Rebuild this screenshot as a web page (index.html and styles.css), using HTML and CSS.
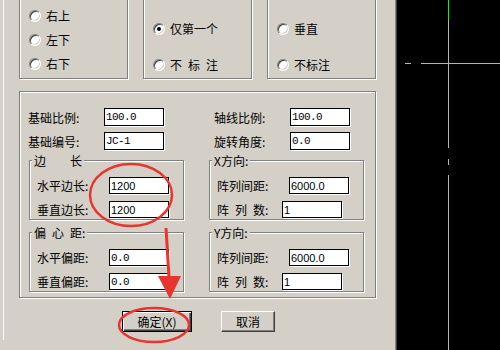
FILE: index.html
```html
<!DOCTYPE html>
<html lang="zh">
<head>
  <meta charset="UTF-8">
  <title>基础参数</title>
  <link rel="stylesheet" href="styles.css">
</head>
<body>
  <div class="screen">
    <div class="dialog">
      <div class="tab">
        <div class="frame">
          <div class="top-groups">
            <div class="group opt opt-three">
              <label class="radio-row"><span class="radio"></span>右上</label>
              <label class="radio-row"><span class="radio"></span>左下</label>
              <label class="radio-row"><span class="radio"></span>右下</label>
            </div>
            <div class="group opt opt-two">
              <label class="radio-row"><span class="radio checked"></span>仅第一个</label>
              <label class="radio-row wide"><span class="radio"></span>不 标 注</label>
            </div>
            <div class="group opt opt-two">
              <label class="radio-row"><span class="radio"></span>垂直</label>
              <label class="radio-row"><span class="radio"></span>不标注</label>
            </div>
          </div>

          <div class="group panel">
            <div class="pair-row">
              <div class="pair"><span class="lbl">基础比例:</span><input class="box mono" value="100.0"></div>
              <div class="pair"><span class="lbl">轴线比例:</span><input class="box mono" value="100.0"></div>
            </div>
            <div class="pair-row">
              <div class="pair"><span class="lbl">基础编号:</span><input class="box mono" value="JC-1"></div>
              <div class="pair"><span class="lbl">旋转角度:</span><input class="box mono" value="0.0"></div>
            </div>

            <div class="sub-grid">
              <div class="group sub">
                <span class="caption wide">边    长</span>
                <div class="field"><span class="lbl-sub">水平边长:</span><input class="box small sans" value="1200"></div>
                <div class="field"><span class="lbl-sub">垂直边长:</span><input class="box small sans" value="1200"></div>
              </div>
              <div class="group sub">
                <span class="caption">X方向:</span>
                <div class="field"><span class="lbl-sub">阵列间距:</span><input class="box small sans" value="6000.0"></div>
                <div class="field"><span class="lbl-sub lbl-short wide">阵 列 数:</span><input class="box small sans" value="1"></div>
              </div>
              <div class="group sub">
                <span class="caption wide">偏 心 距:</span>
                <div class="field"><span class="lbl-sub">水平偏距:</span><input class="box small mono" value="0.0"></div>
                <div class="field"><span class="lbl-sub">垂直偏距:</span><input class="box small mono" value="0.0"></div>
              </div>
              <div class="group sub">
                <span class="caption">Y方向:</span>
                <div class="field"><span class="lbl-sub">阵列间距:</span><input class="box small sans" value="6000.0"></div>
                <div class="field"><span class="lbl-sub lbl-short wide">阵 列 数:</span><input class="box small sans" value="1"></div>
              </div>
            </div>
          </div>
        </div>

        <div class="buttons">
          <button class="btn default">确定(X)</button>
          <button class="btn cancel">取消</button>
        </div>
      </div>

      <!-- red hand-drawn marks over the dialog -->
      <svg class="marks" width="396" height="350" viewBox="0 0 396 350">
        <ellipse cx="131" cy="195" rx="41" ry="31" />
        <line x1="166" y1="228" x2="169" y2="277" />
        <polygon points="158,276 181,276 170,299" />
        <ellipse cx="154" cy="325" rx="35" ry="17" />
      </svg>
    </div>

    <div class="canvas">
      <svg width="103" height="350" viewBox="0 0 103 350">
        <line class="green" x1="51.5" y1="0" x2="51.5" y2="20" />
        <line x1="51.5" y1="20" x2="51.5" y2="148" />
        <line x1="51.5" y1="159" x2="51.5" y2="165" />
        <line x1="51.5" y1="175" x2="51.5" y2="350" />
        <line x1="24" y1="63.5" x2="103" y2="63.5" />
        <line x1="8" y1="63.5" x2="14" y2="63.5" />
      </svg>
    </div>
  </div>
</body>
</html>
```

FILE: styles.css
```css
* {
  box-sizing: border-box;
}

body {
  margin: 0;
  background-color: #d4d0c8;
  font-family: "Noto Sans CJK SC", "Noto Sans", sans-serif;
  font-size: 12px;
  color: #000;
}

.screen {
  display: flex;
  width: 500px;
  height: 350px;
  overflow: hidden;
}

.dialog {
  position: relative;
  width: 396px;
  height: 350px;
  border-right: 1px solid #8a8a8a;
  background-color: #d4d0c8;
}

.tab {
  margin-left: 3px;
  height: 100%;
  border-left: 1px solid #fff;
  padding-left: 7px;
}

/* etched group box, windows classic */
.group {
  border: 1px solid #808080;
  box-shadow: inset 1px 1px 0 #fff, 1px 1px 0 #fff;
}

.frame {
  margin-top: -10px;
  width: 375px;
  height: 313px;
  padding: 5px 0 0 8px;
}

.top-groups {
  display: flex;
  gap: 15px;
}

.opt {
  width: 109px;
  height: 84px;
  padding-left: 9px;
  display: flex;
  flex-direction: column;
}

.opt-three {
  padding-top: 8px;
}

.opt-two {
  padding-top: 21px;
  gap: 12px;
}

.radio-row {
  display: flex;
  align-items: center;
  height: 24px;
  line-height: 12px;
}

.radio {
  position: relative;
  width: 12px;
  height: 12px;
  margin-right: 5px;
  border-radius: 50%;
  border: 1px solid;
  border-color: #808080 #fff #fff #808080;
  background-color: #fff;
  box-shadow: inset 1px 1px 0 #404040, inset -1px -1px 0 #d4d0c8;
}

.radio.checked::after {
  content: "";
  position: absolute;
  left: 3px;
  top: 3px;
  width: 4px;
  height: 4px;
  border-radius: 50%;
  background-color: #000;
}

.wide {
  white-space: pre;
  word-spacing: 3.3px;
}

.panel {
  margin-top: 12px;
  width: 357px;
  height: 207px;
  padding: 16px 0 0 9px;
}

.pair-row {
  display: flex;
  gap: 50px;
  height: 18px;
  margin-left: -1px;
}

.pair-row + .pair-row {
  margin-top: 6px;
}

.pair {
  display: flex;
  align-items: center;
}

.lbl {
  width: 76px;
}

.box {
  width: 60px;
  height: 18px;
  margin: 0;
  padding: 0 1px;
  border: 1px solid #000;
  background-color: #fff;
  color: #000;
  box-shadow: 1px 1px 0 #fff;
  outline: none;
}

.box.small {
  height: 17px;
}

.mono {
  font-family: "Liberation Mono", monospace;
  font-size: 11px;
  letter-spacing: -0.6px;
}

.sans {
  font-family: "Liberation Sans", sans-serif;
  font-size: 11px;
}

.sub-grid {
  display: grid;
  grid-template-columns: 155px 155px;
  grid-auto-rows: 60px;
  column-gap: 25px;
  row-gap: 12px;
  margin-top: 10px;
}

.sub {
  position: relative;
  padding: 16px 0 0 7px;
}

.caption {
  position: absolute;
  top: -6px;
  left: 2px;
  padding: 0 2px;
  line-height: 12px;
  background-color: #d4d0c8;
}

.field {
  display: flex;
  align-items: center;
  height: 17px;
}

.field + .field {
  margin-top: 7px;
}

.lbl-sub {
  width: 72px;
}

.lbl-sub.lbl-short {
  width: 65px;
}

.buttons {
  display: flex;
  justify-content: center;
  gap: 29px;
  width: 375px;
  margin-top: 8px;
}

.btn {
  height: 21px;
  margin: 0;
  padding: 0;
  font-family: "Noto Sans CJK SC", sans-serif;
  font-size: 12px;
  color: #000;
  background-color: #d4d0c8;
}

.btn.default {
  width: 70px;
  border: 1px solid #000;
  box-shadow: inset 1px 1px 0 #fff, inset -1px -1px 0 #404040, inset -2px -2px 0 #808080;
}

.btn.cancel {
  width: 54px;
  border: 1px solid;
  border-color: #fff #404040 #404040 #fff;
  box-shadow: inset -1px -1px 0 #808080;
}

.marks {
  position: absolute;
  left: 0;
  top: 0;
  pointer-events: none;
}

.marks ellipse,
.marks line {
  fill: none;
  stroke: #e8352e;
  stroke-width: 2.5;
}

.marks line {
  stroke-width: 3;
}

.marks polygon {
  fill: #e8352e;
}

.canvas {
  flex: 1;
  height: 350px;
  border-left: 1px solid #404040;
  background-color: #000;
}

.canvas svg {
  display: block;
}

.canvas line {
  stroke: #b4b4b4;
  stroke-width: 1;
}

.canvas line.green {
  stroke: #00ff00;
}
```
